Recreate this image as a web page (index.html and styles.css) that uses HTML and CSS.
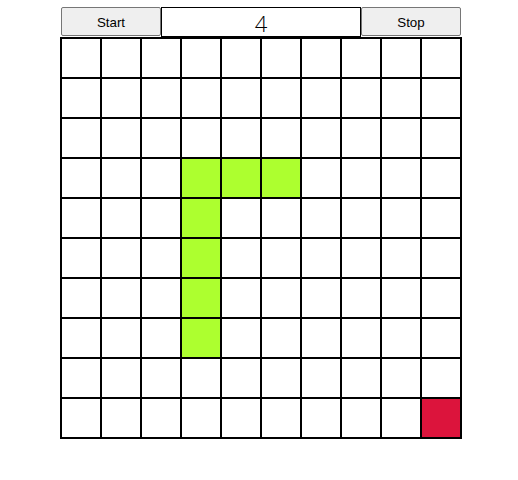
FILE: index.html
```html
<!DOCTYPE html>
<html>
<head>
<meta charset="utf-8">
<link rel="stylesheet" href="styles.css">
</head>
<body>
<div class="app">
  <div class="controls">
    <button class="btn">Start</button>
    <div class="score">4</div>
    <button class="btn">Stop</button>
  </div>
  <div class="grid">
    <div class="cell"></div><div class="cell"></div><div class="cell"></div><div class="cell"></div><div class="cell"></div><div class="cell"></div><div class="cell"></div><div class="cell"></div><div class="cell"></div><div class="cell"></div>
    <div class="cell"></div><div class="cell"></div><div class="cell"></div><div class="cell"></div><div class="cell"></div><div class="cell"></div><div class="cell"></div><div class="cell"></div><div class="cell"></div><div class="cell"></div>
    <div class="cell"></div><div class="cell"></div><div class="cell"></div><div class="cell"></div><div class="cell"></div><div class="cell"></div><div class="cell"></div><div class="cell"></div><div class="cell"></div><div class="cell"></div>
    <div class="cell"></div><div class="cell"></div><div class="cell"></div><div class="cell snake"></div><div class="cell snake"></div><div class="cell snake"></div><div class="cell"></div><div class="cell"></div><div class="cell"></div><div class="cell"></div>
    <div class="cell"></div><div class="cell"></div><div class="cell"></div><div class="cell snake"></div><div class="cell"></div><div class="cell"></div><div class="cell"></div><div class="cell"></div><div class="cell"></div><div class="cell"></div>
    <div class="cell"></div><div class="cell"></div><div class="cell"></div><div class="cell snake"></div><div class="cell"></div><div class="cell"></div><div class="cell"></div><div class="cell"></div><div class="cell"></div><div class="cell"></div>
    <div class="cell"></div><div class="cell"></div><div class="cell"></div><div class="cell snake"></div><div class="cell"></div><div class="cell"></div><div class="cell"></div><div class="cell"></div><div class="cell"></div><div class="cell"></div>
    <div class="cell"></div><div class="cell"></div><div class="cell"></div><div class="cell snake"></div><div class="cell"></div><div class="cell"></div><div class="cell"></div><div class="cell"></div><div class="cell"></div><div class="cell"></div>
    <div class="cell"></div><div class="cell"></div><div class="cell"></div><div class="cell"></div><div class="cell"></div><div class="cell"></div><div class="cell"></div><div class="cell"></div><div class="cell"></div><div class="cell"></div>
    <div class="cell"></div><div class="cell"></div><div class="cell"></div><div class="cell"></div><div class="cell"></div><div class="cell"></div><div class="cell"></div><div class="cell"></div><div class="cell"></div><div class="cell food"></div>
  </div>
</div>
</body>
</html>
```

FILE: styles.css
```css
html, body {
  margin: 0;
  padding: 0;
  background: #ffffff;
}
.app {
  padding-top: 7px;
  padding-left: 60px;
}
.controls {
  display: flex;
  width: 400px;
  height: 30px;
  margin-left: 1px;
}
.btn {
  box-sizing: border-box;
  width: 100px;
  height: 29px;
  margin: 0;
  padding: 1px 0 0 0;
  border: 1px solid #767676;
  border-radius: 2px;
  background: #efefef;
  color: #000;
  font-family: "Liberation Sans", Arial, sans-serif;
  font-size: 13.33px;
}
.score {
  box-sizing: border-box;
  width: 200px;
  height: 30px;
  padding-top: 2px;
  border: 1px solid #000;
  display: flex;
  align-items: center;
  justify-content: center;
  font-family: "Open Sans", "DejaVu Sans", sans-serif;
  font-weight: 300;
  font-size: 22px;
  color: #000;
}
.grid {
  display: grid;
  grid-template-columns: repeat(10, 40px);
  grid-auto-rows: 40px;
  width: 400px;
  border-left: 2px solid #000;
  border-top: 2px solid #000;
}
.cell {
  box-sizing: border-box;
  border-right: 2px solid #000;
  border-bottom: 2px solid #000;
  background: #fff;
}
.snake {
  background: #adff2f;
}
.food {
  background: #dc143c;
}
```
